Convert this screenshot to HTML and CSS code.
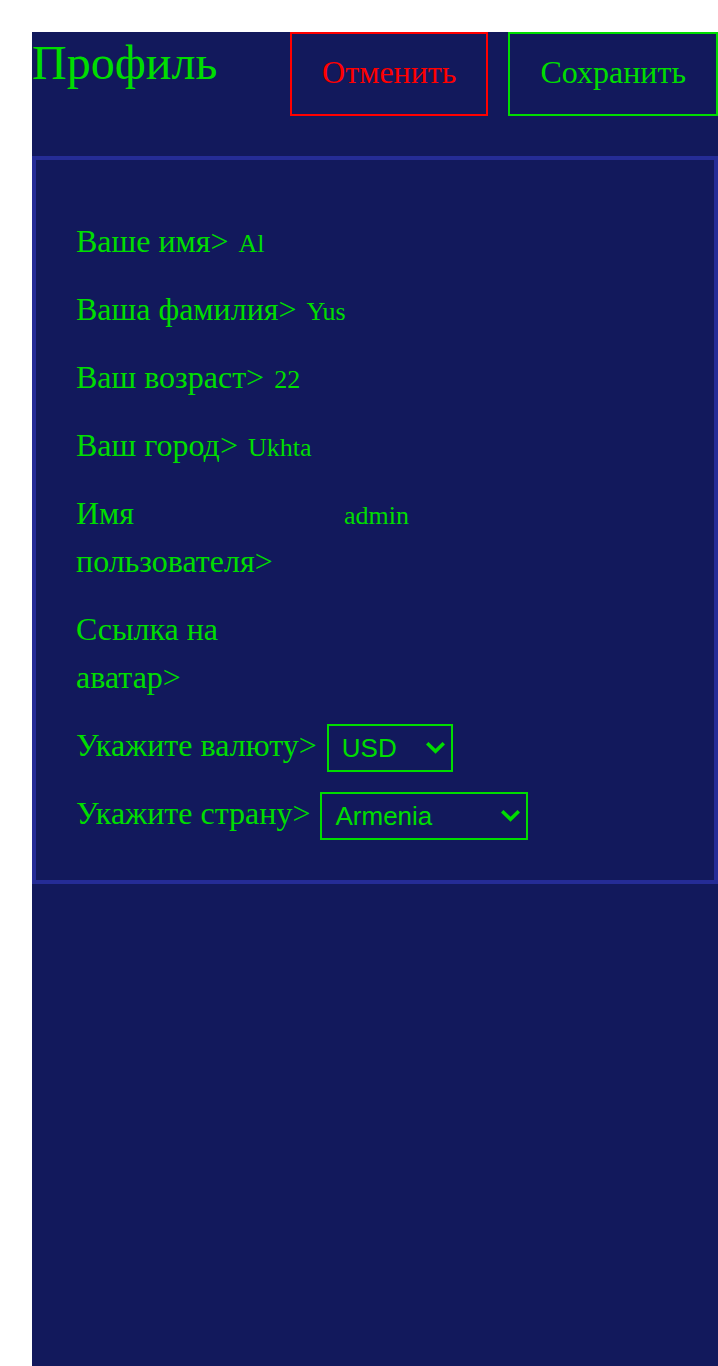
FILE: index.html
```html
<!DOCTYPE html>
<html lang="ru">
<head>
<meta charset="utf-8">
<title>Профиль</title>
<link rel="stylesheet" href="styles.css">
</head>
<body>
<div class="panel">
  <header class="header">
    <h1 class="title">Профиль</h1>
    <div class="actions">
      <button class="btn btn-cancel" type="button">Отменить</button>
      <button class="btn btn-save" type="button">Сохранить</button>
    </div>
  </header>
  <section class="card">
    <div class="row"><span class="label">Ваше имя&gt;</span><span class="value">Al</span></div>
    <div class="row"><span class="label">Ваша фамилия&gt;</span><span class="value">Yus</span></div>
    <div class="row"><span class="label">Ваш возраст&gt;</span><span class="value">22</span></div>
    <div class="row"><span class="label">Ваш город&gt;</span><span class="value">Ukhta</span></div>
    <div class="row"><span class="label label-wrap">Имя пользователя&gt;</span><span class="value">admin</span></div>
    <div class="row"><span class="label label-wrap">Ссылка на аватар&gt;</span><span class="value"></span></div>
    <div class="row"><span class="label">Укажите валюту&gt;</span>
      <span class="select-wrap">
        <select class="select select-currency">
          <option>USD</option><option>EUR</option><option>RUB</option>
        </select>
        <svg class="chevron" width="19" height="12" viewBox="0 0 19 12" aria-hidden="true"><path d="M2.5 2.5 L9.5 9.2 L16.5 2.5" fill="none" stroke="#00dd00" stroke-width="3.6" stroke-linecap="square" stroke-linejoin="miter"/></svg>
      </span>
    </div>
    <div class="row"><span class="label">Укажите страну&gt;</span>
      <span class="select-wrap">
        <select class="select select-country">
          <option>Armenia</option><option>Russia</option><option>Kazakhstan</option>
        </select>
        <svg class="chevron" width="19" height="12" viewBox="0 0 19 12" aria-hidden="true"><path d="M2.5 2.5 L9.5 9.2 L16.5 2.5" fill="none" stroke="#00dd00" stroke-width="3.6" stroke-linecap="square" stroke-linejoin="miter"/></svg>
      </span>
    </div>
  </section>
</div>
</body>
</html>
```
FILE: styles.css
```css
html, body {
  margin: 0;
  padding: 0;
  background: #ffffff;
}

body {
  font-family: "Liberation Serif", "Times New Roman", serif;
  color: #00dd00;
}

.panel {
  margin: 32px 0 0 32px;
  min-height: 1400px;
  background: #12195c;
}

.header {
  display: flex;
  align-items: flex-start;
  height: 84px;
}

.title {
  flex: 1;
  margin: 0;
  font-size: 48px;
  font-weight: normal;
  line-height: 62px;
  color: #00dd00;
}

.actions {
  display: flex;
  gap: 20px;
}

.btn {
  font-family: "Liberation Serif", "Times New Roman", serif;
  font-size: 32px;
  line-height: 40px;
  padding: 18px 30px 22px;
  background: transparent;
  border: 2px solid;
  border-radius: 0;
  margin: 0;
}

.btn-cancel {
  color: #ff0000;
  border-color: #ff0000;
}

.btn-save {
  color: #00dd00;
  border-color: #00dd00;
}

.card {
  margin-top: 40px;
  border: 4px solid #252c96;
  padding: 57px 40px 43px;
  display: flex;
  flex-direction: column;
  gap: 20px;
}

.row {
  display: flex;
  align-items: baseline;
  gap: 10px;
  font-size: 32px;
  line-height: 48px;
}

.label-wrap {
  width: 250px;
  margin-right: 8px;
}

.value {
  font-size: 26px;
  line-height: 1;
}

.select-wrap {
  position: relative;
  display: inline-flex;
  align-self: flex-start;
  margin: 3px 0 -3px;
}

.select {
  appearance: none;
  -webkit-appearance: none;
  font-family: "Liberation Sans", Arial, sans-serif;
  font-size: 26px;
  color: #00dd00;
  background: transparent;
  border: 2px solid #00dd00;
  border-radius: 0;
  height: 48px;
  padding: 0 30px 0 13px;
  margin: 0;
  outline: none;
}

.select-currency {
  width: 126px;
}

.select-country {
  width: 208px;
}

.chevron {
  position: absolute;
  right: 8px;
  top: 18px;
  pointer-events: none;
}
```
